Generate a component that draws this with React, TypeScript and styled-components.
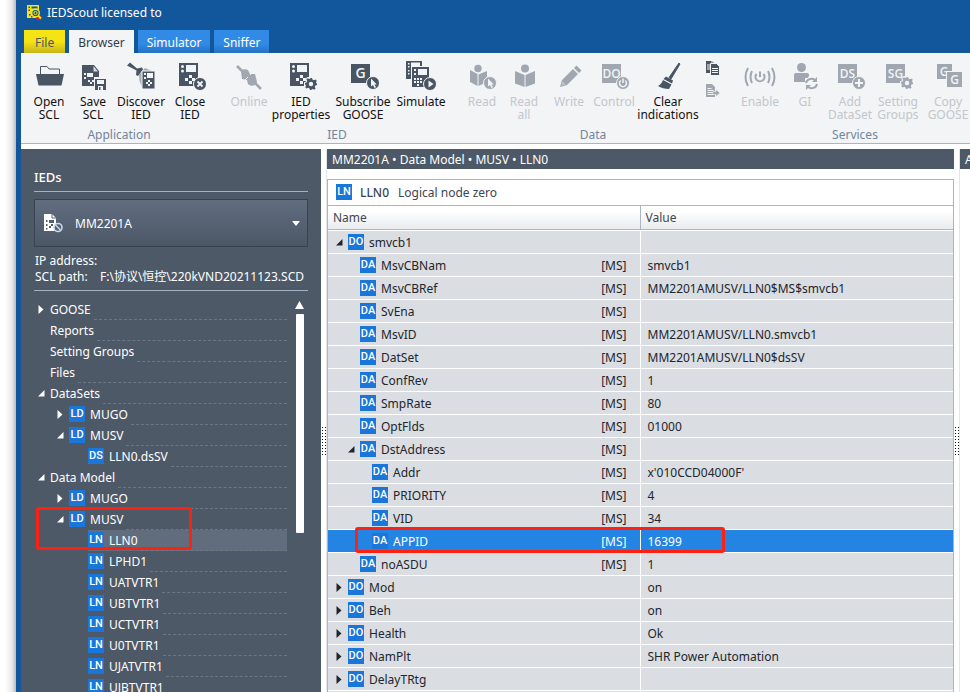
import React from "react";
import styled, { createGlobalStyle, css } from "styled-components";

const ink = "#4a5564";
const slate = "#4e5967";
const blue = "#12579b";
const badgeBlue = "#1a76d9";
const ribbonBg = "#f2f4f6";
const line = "#a9b4c4";
const red = "#ff2010";

const GlobalStyle = createGlobalStyle`
  * { box-sizing: border-box; }
  body {
    margin: 0;
    background: #fff;
    font-family: "Noto Sans", "Noto Sans CJK SC", sans-serif;
    font-size: 12px;
    line-height: 16px;
    color: #22262c;
  }
  button, select { font: inherit; }
`;

const Screen = styled.div`
  display: flex;
  height: 100vh;
  overflow: hidden;
`;

const Shadow = styled.div`
  flex: 0 0 16px;
  background: linear-gradient(to right, #fff 30%, #e9e9e9 75%, #b9bcc0);
`;

const Window = styled.div`
  flex: 1;
  min-width: 0;
  display: flex;
  flex-direction: column;
  background: ${blue};
  padding-left: 5px;
`;

const TitleBar = styled.header`
  display: flex;
  align-items: center;
  gap: 5px;
  height: 25px;
  padding-left: 6px;
  color: #fff;
`;

const TabBar = styled.nav`
  display: flex;
  gap: 4px;
  padding: 5px 3px 0;
`;

const Tab = styled.button<{ $kind?: "file" | "active" }>`
  height: 23px;
  border: 0;
  padding: 3px 9px 0;
  color: #fff;
  background: linear-gradient(#318ae6 60%, #2472c4);
  ${(p) => p.$kind === "file" && css`
    padding: 3px 11px 0;
    color: ${ink};
    background: linear-gradient(#f6e314 50%, #c6b51a);
  `}
  ${(p) => p.$kind === "active" && css`
    color: #333c48;
    background: ${ribbonBg};
  `}
`;

const Ribbon = styled.div`
  display: flex;
  height: 91px;
  overflow: hidden;
  background: ${ribbonBg};
  border-bottom: 1px solid ${line};
`;

const Group = styled.section<{ $pad: number; $padRight?: number }>`
  flex: none;
  position: relative;
  display: flex;
  flex-direction: column;
  padding: 8px ${(p) => p.$padRight ?? 4}px 0 ${(p) => p.$pad}px;
  & + &::before {
    content: "";
    position: absolute;
    left: 0;
    top: 9px;
    height: 75px;
    width: 1px;
    background: ${line};
  }
`;

const Tools = styled.div`
  display: flex;
  height: 66px;
`;

const GroupLabel = styled.div`
  text-align: center;
  color: #73859c;
`;

const ToolButton = styled.button<{ $w: number }>`
  width: ${(p) => p.$w}px;
  display: flex;
  flex-direction: column;
  align-items: center;
  gap: 3px;
  padding: 0;
  border: 0;
  background: none;
  white-space: nowrap;
  line-height: 13px;
  color: #111;
  & svg { color: ${ink}; flex: none; }
  &:disabled { color: #c3c7cc; }
  &:disabled svg { color: #a0a7b0; }
`;

const SmallTools = styled.div`
  display: flex;
  flex-direction: column;
  gap: 8px;
  width: 24px;
  align-items: center;
`;

const SmallButton = styled.button`
  display: flex;
  padding: 0;
  border: 0;
  background: none;
  color: ${ink};
  &:disabled { color: #a0a7b0; }
`;

const Body = styled.div`
  flex: 1;
  min-height: 0;
  display: flex;
  padding-top: 5px;
  background: #fff;
`;

const Sidebar = styled.aside`
  flex: 0 0 300px;
  overflow: hidden;
  padding: 20px 13px 0;
  background: ${slate};
  color: #fff;
`;

const SideTitle = styled.h2`
  margin: 0 0 7px;
  padding-bottom: 6px;
  border-bottom: 1px solid #a3b2c2;
  font-size: 13px;
  line-height: 16px;
  font-weight: 500;
`;

const Picker = styled.div`
  position: relative;
  height: 48px;
  border: 1px solid #39424e;
  background: linear-gradient(#616e80, #4c5766);
  & > svg { position: absolute; pointer-events: none; }
  & > svg:first-child { left: 8px; top: 13px; }
  & > svg:last-child { right: 7px; top: 21px; }
`;

const PickerSelect = styled.select`
  appearance: none;
  width: 100%;
  height: 100%;
  padding: 2px 24px 0 40px;
  border: 0;
  color: #fff;
  background: none;
`;

const Facts = styled.dl`
  display: grid;
  grid-template-columns: 65px 1fr;
  margin: 6px 0 8px;
  padding: 0 0 5px 1px;
  border-bottom: 1px solid #a3b2c2;
  white-space: nowrap;
  & dt, & dd { margin: 0; }
`;

const TreeArea = styled.div`
  display: flex;
  gap: 8px;
  padding-right: 3px;
`;

const Tree = styled.ul`
  flex: 1;
  min-width: 0;
  margin: 0;
  padding: 0;
  list-style: none;
`;

const TreeRow = styled.li<{ $level: number }>`
  position: relative;
  display: flex;
  height: 21px;
  padding-left: ${(p) => 4 + 19 * p.$level}px;
`;

const Twist = styled.span<{ $w: number }>`
  flex: none;
  width: ${(p) => p.$w}px;
  display: flex;
  align-items: center;
`;

const TreeItem = styled.span<{ $selected?: boolean }>`
  flex: 1;
  display: flex;
  line-height: 22px;
  white-space: nowrap;
  background: ${(p) => (p.$selected ? "#616d7d" : "transparent")};
`;

const Dashes = styled.span`
  flex: 1;
  margin-left: 3px;
  border-bottom: 1px dashed #6c7785;
`;

const Badge = styled.span`
  flex: none;
  display: inline-block;
  width: 16px;
  height: 16px;
  margin: 2px 5px 0 0;
  line-height: 16px;
  text-align: center;
  font-family: Roboto, sans-serif;
  font-weight: 500;
  font-size: 11px;
  color: #fff;
  background: ${badgeBlue};
`;

const Scroll = styled.div`
  flex: none;
  width: 10px;
  display: flex;
  flex-direction: column;
  align-items: center;
  gap: 5px;
  padding: 2px 1px 0 0;
`;

const Thumb = styled.div`
  width: 8px;
  height: 219px;
  border-radius: 1px;
  background: #fff;
`;

const Mark = styled.span<{ $w: number; $h: number }>`
  position: absolute;
  z-index: 1;
  width: ${(p) => p.$w}px;
  height: ${(p) => p.$h}px;
  border: 3px solid ${red};
  border-radius: 3px;
  pointer-events: none;
`;

const TreeMark = styled(Mark)`
  left: 2px;
  top: -2px;
`;

const RowMark = styled(Mark)`
  left: 27px;
  top: -3px;
`;

const Splitter = styled.div`
  flex: 0 0 6px;
  display: flex;
  align-items: center;
  justify-content: center;
  border-right: 1px solid #e4e7ea;
`;

const Grip = styled.div`
  width: 4px;
  height: 28px;
  margin-top: 40px;
  background:
    repeating-linear-gradient(transparent 0 1px, #fff 1px 3px),
    repeating-linear-gradient(to right, #111 0 1px, #fff 1px 3px);
`;

const Main = styled.main`
  flex: 1;
  min-width: 0;
  overflow: hidden;
`;

const PanelTitle = styled.div`
  height: 20px;
  padding-left: 5px;
  line-height: 21px;
  color: #fff;
  background: ${slate};
  white-space: nowrap;
`;

const RightPanel = styled.section`
  flex: 0 0 10px;
  overflow: hidden;
`;

const Sheet = styled.div`
  margin-top: 10px;
  border: 1px solid ${line};
`;

const SheetTitle = styled.div`
  display: flex;
  height: 26px;
  padding: 3px 8px 0;
  line-height: 20px;
  border-bottom: 1px solid ${line};
  color: #3c4450;
  & > ${Badge} { margin-right: 8px; margin-top: 1px; }
  & > strong { font-weight: 500; margin-right: 9px; }
`;

const Grid = styled.table`
  width: 100%;
  table-layout: fixed;
  border-collapse: separate;
  border-spacing: 0;
  & th, & td { padding: 0; text-align: left; font-weight: 400; white-space: nowrap; }
  & th {
    height: 24px;
    padding: 0 5px;
    color: #3f4650;
    border-bottom: 1px solid ${line};
    background: linear-gradient(#fff 20%, #e9ebee);
  }
  & th:first-child { width: calc(50% - 1px); border-right: 1px solid ${line}; }
  & td:first-child { border-right: 1px solid #fff; }
`;

const GridRow = styled.tr<{ $selected?: boolean }>`
  background: ${(p) => (p.$selected ? "#2484e4" : "#dadde2")};
  color: ${(p) => (p.$selected ? "#fff" : "#22262c")};
  & td { height: 23px; border-top: 1px solid #fff; }
  & td + td { padding: 2px 0 0 7px; }
`;

const NameCell = styled.div<{ $level: number }>`
  position: relative;
  display: flex;
  height: 22px;
  line-height: 24px;
  padding: 0 13px 0 ${(p) => 8 + 12 * p.$level}px;
  & > ${Badge} { margin-top: 3px; }
`;

const Access = styled.span`
  margin-left: auto;
`;

const TriRight = () => (
  <svg width="6" height="9" viewBox="0 0 6 9" aria-hidden="true"><path d="M0.5 0L5.5 4.500L0.5 9z" fill="currentColor" /></svg>
);
const TriOpen = () => (
  <svg width="7" height="7" viewBox="0 0 7 7" aria-hidden="true"><path d="M6.500 0V6.5H0z" fill="currentColor" /></svg>
);

const Icon = ({ children }: { children: React.ReactNode }) => (
  <svg width="32" height="31" viewBox="0 0 32 31" fill="currentColor" aria-hidden="true">{children}</svg>
);

const GEAR = "M-1-6h2l.5 1.6 1.4.6 1.5-.8 1.4 1.4-.8 1.5.6 1.4L6-1v2l-1.600.500-.6 1.400.8 1.500-1.400 1.400-1.500-.8-1.400.6L1 6h-2l-.5-1.600-1.400-.6-1.500.8-1.400-1.400.8-1.500-.6-1.400L-6 1v-2l1.600-.5.6-1.400-.8-1.500 1.400-1.400 1.500.8 1.400-.6z";
const Gear = ({ x, y }: { x: number; y: number }) => (
  <g transform={`translate(${x} ${y})`}>
    <path d={GEAR} stroke={ribbonBg} strokeWidth="2" />
    <path d={GEAR} />
    <circle r="2.200" fill={ribbonBg} />
  </g>
);

const Dot = ({ x, y }: { x: number; y: number }) => (
  <circle cx={x} cy={y} r="6.500" stroke={ribbonBg} strokeWidth="1" />
);

const Pointer = ({ x, y }: { x: number; y: number }) => (
  <g>
    <Dot x={x} y={y} />
    <path d={`M${x - 2} ${y - 4.500}v8l2-1.500 1.500 3 1.500-.8-1.500-2.700h2.300z`} fill={ribbonBg} />
  </g>
);

const Device = () => (
  <g>
    <path d="M5 2h19v23H5z" />
    <g fill={ribbonBg}>
      <circle cx="8.500" cy="5.500" r="1.500" />
      <circle cx="8.500" cy="10" r="1.500" />
      <path d="M12 4h10v7H12zM11 17h3v3h-3zM15 14h3v3h-3zM18 17h3v3h-3zM15 20h3v3h-3z" />
    </g>
  </g>
);

const Block = ({ text }: { text: string }) => (
  <g>
    <path d="M4 3h19v19H4z" />
    <text x="13.500" y="17" textAnchor="middle" fontFamily="Open Sans, sans-serif" fontWeight="600" fontSize={text.length > 1 ? 12 : 14} fill={ribbonBg}>{text}</text>
  </g>
);

const icons = {
  open: <Icon><path d="M7.500 13V5.500H14l2 2.500h10.500v5" fill="none" stroke="currentColor" /><path d="M3 13h28l-2.500 11.500H5.500z" /></Icon>,
  save: (
    <Icon>
      <path d="M5 4h12l5 6v10h-4v5H5z" />
      <path d="M16.500 5v5.500H21z" fill={ribbonBg} opacity=".85" />
      <g fill={ribbonBg}><path d="M7 12h2v2H7zM7 16h2v2H7zM10 12h6v4h-6zM11 19h2v2h-2zM13 21h2v2h-2zM15 19h2v2h-2z" /><path d="M17 16h13v14H17z" /></g>
      <path d="M18 18h11v11H18z" /><path d="M20 19h7v4h-7zM21 25h5v4h-5z" fill={ribbonBg} /><path d="M22 26h1.500v3H22z" />
    </Icon>
  ),
  discover: (
    <Icon>
      <path d="M2 4.500L5 1.500l7 6 5-1 1 2-5 6.500-2-1 .5-4.500z" />
      <path d="M14 14L20 7l7 3-10 16-2.500-6z" opacity=".45" />
      <path d="M17 10h13v18H17z" stroke={ribbonBg} strokeWidth="1" />
      <g fill={ribbonBg}><path d="M19 12h2v2h-2zM19 16h2v2h-2zM22 12h6v5h-6zM23 19h2v2h-2zM21 21h2v2h-2zM25 21h2v2h-2zM23 23h2v2h-2z" /></g>
    </Icon>
  ),
  close: <Icon><Device /><Dot x={26} y={23} /><path d="M23.500 20.500l5 5m0-5l-5 5" stroke={ribbonBg} strokeWidth="1.800" /></Icon>,
  online: (
    <Icon>
      <path d="M4 5l8 8M21 21l7 7" stroke="currentColor" strokeWidth="2.500" />
      <path d="M8 10c2-2 4-2 7-1l2 4 5 0 2 8-2 3c-3 1-5 1-7-1l-1-4-5-1z" />
      <path d="M11 20l4-4M17 14l3-4" stroke={ribbonBg} strokeWidth="1" />
    </Icon>
  ),
  props: <Icon><Device /><Gear x={26} y={23} /></Icon>,
  subscribe: <Icon><Block text="G" /><Pointer x={26} y={22} /></Icon>,
  simulate: (
    <Icon>
      <path d="M1 0h16v18H1z" />
      <g fill={ribbonBg}><path d="M6 1.500h9v6H6zM3 2h1.500v1.500H3zM3 5h1.500v1.500H3zM3 9h1.500v1.500H3zM3 12h1.500v1.500H3z" /><path d="M6 5h19v22H6z" /></g>
      <path d="M7 6h17v20H7z" />
      <g fill={ribbonBg}><path d="M13 8h9v6h-9zM9 8h2v2H9zM9 12h2v2H9zM9 17h2v2H9zM12 17h2v2h-2zM15 17h2v2h-2zM9 20h2v2H9zM12 20h2v2h-2zM15 20h2v2h-2zM12 23h2v2h-2z" /></g>
      <Dot x={25} y={23} /><path d="M23.500 19.500v7l5-3.500z" fill={ribbonBg} />
    </Icon>
  ),
  read: <Icon><circle cx="12" cy="7.500" r="3.700" /><path d="M4 9l7.500 4v12L4 21zM21 10l-8.500 3.500V25l8.500-4z" /><Pointer x={24} y={22} /></Icon>,
  readAll: <Icon><circle cx="17" cy="7.500" r="4" /><path d="M7 10l9.500 4v12L7 22.500zM27 10l-9.500 4v12l9.500-3.500z" /></Icon>,
  write: <Icon><path d="M7 26l2-7L20 8l5 5-11 11zM21 7l2.500-2.500 5 5L26 12z" /><path d="M8.500 24.500l1-4 3 3z" fill={ribbonBg} opacity=".4" /></Icon>,
  control: <Icon><Block text="DO" /><Dot x={25} y={22} /><path d="M22.800 19.500a3.500 3.500 0 1 0 4.400 0M25 17.500v4.500" stroke={ribbonBg} strokeWidth="1.500" fill="none" /></Icon>,
  clear: <Icon><path d="M27 2l1 1-9 15-2-1.500z" stroke="currentColor" /><path d="M14 15.500l7 4-1 3-8.500-4.500z" /><path d="M11 19l8.500 4.500L17 28c-4 0-8-1-11-3 2-1 4-3 5-6z" /></Icon>,
  enable: (
    <Icon>
      <g fill="none" stroke="currentColor" strokeWidth="2">
        <path d="M12.500 13a4.500 4.500 0 1 0 7 0M16 10.500v5.500" /><path d="M8 10q-3 6 0 12M24 10q3 6 0 12M4 7q-5 9 0 18M28 7q5 9 0 18" />
      </g>
    </Icon>
  ),
  gi: (
    <Icon>
      <circle cx="12.500" cy="6.500" r="4.500" /><path d="M5 14q0-2 2-2h11q2 0 2 2v1l-4 6H5z" />
      <path d="M16 17h13v12H16z" fill={ribbonBg} />
      <path d="M17 22a5.500 5 0 0 1 9-3M28 23a5.500 5 0 0 1-9 3" fill="none" stroke="currentColor" strokeWidth="2" />
      <path d="M28 16v5h-5zM17 29v-5h5z" />
    </Icon>
  ),
  addSet: <Icon><Block text="DS" /><Dot x={25} y={22} /><path d="M25 18v8M21 22h8" stroke={ribbonBg} strokeWidth="2" /></Icon>,
  setGroups: <Icon><Block text="SG" /><Gear x={25} y={22} /></Icon>,
  copyGoose: (
    <Icon>
      <path d="M5 3h15v15H5z" /><text x="12" y="15" textAnchor="middle" fontFamily="Open Sans, sans-serif" fontWeight="600" fontSize="12" fill={ribbonBg}>G</text>
      <path d="M14.500 10.500h16v16h-16z" stroke={ribbonBg} /><text x="22.500" y="23" textAnchor="middle" fontFamily="Open Sans, sans-serif" fontWeight="600" fontSize="12" fill={ribbonBg}>G</text>
    </Icon>
  ),
};

type Tool = { icon: keyof typeof icons; label: [string, string?]; w: number; off?: boolean };
const ToolList = ({ tools }: { tools: Tool[] }) => (
  <>
    {tools.map((t) => (
      <ToolButton key={t.icon} $w={t.w} disabled={t.off}>
        {icons[t.icon]}
        <span>{t.label[0]}{t.label[1] && <><br />{t.label[1]}</>}</span>
      </ToolButton>
    ))}
  </>
);

const application: Tool[] = [
  { icon: "open", label: ["Open", "SCL"], w: 46 },
  { icon: "save", label: ["Save", "SCL"], w: 42 },
  { icon: "discover", label: ["Discover", "IED"], w: 54 },
  { icon: "close", label: ["Close", "IED"], w: 44 },
];
const ied: Tool[] = [
  { icon: "online", label: ["Online"], w: 44, off: true },
  { icon: "props", label: ["IED", "properties"], w: 60 },
  { icon: "subscribe", label: ["Subscribe", "GOOSE"], w: 64 },
  { icon: "simulate", label: ["Simulate"], w: 52 },
];
const data: Tool[] = [
  { icon: "read", label: ["Read"], w: 42, off: true },
  { icon: "readAll", label: ["Read", "all"], w: 42, off: true },
  { icon: "write", label: ["Write"], w: 48, off: true },
  { icon: "control", label: ["Control"], w: 42, off: true },
  { icon: "clear", label: ["Clear", "indications"], w: 66 },
];
const services: Tool[] = [
  { icon: "enable", label: ["Enable"], w: 44, off: true },
  { icon: "gi", label: ["GI"], w: 46, off: true },
  { icon: "addSet", label: ["Add", "DataSet"], w: 44, off: true },
  { icon: "setGroups", label: ["Setting", "Groups"], w: 52, off: true },
  { icon: "copyGoose", label: ["Copy", "GOOSE"], w: 48, off: true },
];

type Node = { level: number; text: string; badge?: string; state?: "open" | "closed"; selected?: boolean; mark?: boolean };
const tree: Node[] = [
  { level: 0, text: "GOOSE", state: "closed" },
  { level: 0, text: "Reports" },
  { level: 0, text: "Setting Groups" },
  { level: 0, text: "Files" },
  { level: 0, text: "DataSets", state: "open" },
  { level: 1, text: "MUGO", badge: "LD", state: "closed" },
  { level: 1, text: "MUSV", badge: "LD", state: "open" },
  { level: 2, text: "LLN0.dsSV", badge: "DS" },
  { level: 0, text: "Data Model", state: "open" },
  { level: 1, text: "MUGO", badge: "LD", state: "closed" },
  { level: 1, text: "MUSV", badge: "LD", state: "open", mark: true },
  { level: 2, text: "LLN0", badge: "LN", selected: true },
  ...["LPHD1", "UATVTR1", "UBTVTR1", "UCTVTR1", "U0TVTR1", "UJATVTR1", "UJBTVTR1"].map((text) => ({ level: 2, text, badge: "LN" })),
];

type Attr = Node & { ms?: boolean; value?: string };
const attr = (level: number, text: string, value = "", extra: Partial<Attr> = {}): Attr => ({ level, text, value, badge: "DA", ms: true, ...extra });
const obj = (text: string, value = "", state: "open" | "closed" = "closed"): Attr => ({ level: 0, text, value, badge: "DO", state });
const attrs: Attr[] = [
  obj("smvcb1", "", "open"),
  attr(1, "MsvCBNam", "smvcb1"),
  attr(1, "MsvCBRef", "MM2201AMUSV/LLN0$MS$smvcb1"),
  attr(1, "SvEna"),
  attr(1, "MsvID", "MM2201AMUSV/LLN0.smvcb1"),
  attr(1, "DatSet", "MM2201AMUSV/LLN0$dsSV"),
  attr(1, "ConfRev", "1"),
  attr(1, "SmpRate", "80"),
  attr(1, "OptFlds", "01000"),
  attr(1, "DstAddress", "", { state: "open" }),
  attr(2, "Addr", "x'010CCD04000F'"),
  attr(2, "PRIORITY", "4"),
  attr(2, "VID", "34"),
  attr(2, "APPID", "16399", { selected: true, mark: true }),
  attr(1, "noASDU", "1"),
  obj("Mod", "on"),
  obj("Beh", "on"),
  obj("Health", "Ok"),
  obj("NamPlt", "SHR Power Automation"),
  obj("DelayTRtg"),
];

const Twisty = ({ state, w }: { state?: "open" | "closed"; w: number }) => (
  <Twist $w={w}>{state === "open" ? <TriOpen /> : state === "closed" ? <TriRight /> : null}</Twist>
);

export default function App() {
  return (
    <Screen>
      <GlobalStyle />
      <Shadow />
      <Window>
        <TitleBar>
          <svg width="15" height="15" viewBox="0 0 15 15" aria-hidden="true">
            <path d="M0 0h12v13H0z" fill="#f6e314" />
            <path d="M1.500 1.500h1.500v1.500H1.500zM1.500 4.500h1.500v1.500H1.500zM4.500 1.500h6v2h-6zM2 9h1.500v1.500H2zM4 11h1.500v1.500H4z" fill={blue} />
            <path d="M8 11l2-1 4 1v4h-4z" fill="#d81e28" />
            <circle cx="8.500" cy="8" r="3.800" fill={blue} stroke="#f6e314" strokeWidth="1.400" />
            <circle cx="8.500" cy="8" r="1.600" fill="none" stroke="#f6e314" />
            <path d="M11 10.500l3 3" stroke="#f6e314" strokeWidth="2" />
          </svg>
          <span>IEDScout licensed to</span>
        </TitleBar>
        <TabBar>
          <Tab $kind="file">File</Tab>
          <Tab $kind="active">Browser</Tab>
          <Tab>Simulator</Tab>
          <Tab>Sniffer</Tab>
        </TabBar>
        <Ribbon>
          <Group $pad={5} $padRight={7}>
            <Tools><ToolList tools={application} /></Tools>
            <GroupLabel>Application</GroupLabel>
          </Group>
          <Group $pad={8} $padRight={5}>
            <Tools><ToolList tools={ied} /></Tools>
            <GroupLabel>IED</GroupLabel>
          </Group>
          <Group $pad={9}>
            <Tools>
              <ToolList tools={data} />
              <SmallTools>
                <SmallButton aria-label="Copy">
                  <svg width="14" height="15" viewBox="0 0 14 15" fill="currentColor" aria-hidden="true">
                    <path d="M0 0h6l3 3v9H0z" /><path d="M1 4h4M1 6h4M1 8h4M6 0v3h3" stroke={ribbonBg} fill="none" />
                    <path d="M4.500 2.500h6l3 3v9h-9z" stroke={ribbonBg} /><path d="M6 7.500h6M6 9.500h6M6 11.500h6" stroke={ribbonBg} />
                  </svg>
                </SmallButton>
                <SmallButton aria-label="Export" disabled>
                  <svg width="14" height="14" viewBox="0 0 14 14" fill="currentColor" aria-hidden="true">
                    <path d="M0 0h6l3 3v10H0z" /><path d="M1.500 4.500h4M1.500 6.500h6M1.500 8.500h6M1.500 10.500h6" stroke={ribbonBg} />
                    <path d="M7 7.500h3v-2l4 3.500-4 3.500v-2H7z" stroke={ribbonBg} strokeWidth=".5" />
                  </svg>
                </SmallButton>
              </SmallTools>
            </Tools>
            <GroupLabel>Data</GroupLabel>
          </Group>
          <Group $pad={9} $padRight={8}>
            <Tools><ToolList tools={services} /></Tools>
            <GroupLabel>Services</GroupLabel>
          </Group>
        </Ribbon>
        <Body>
          <Sidebar>
            <SideTitle>IEDs</SideTitle>
            <Picker>
              <svg width="20" height="20" viewBox="0 0 20 20" aria-hidden="true">
                <path d="M1 1h8l4 4v13H1z" fill="#fff" />
                <path d="M9 1v4h4" fill="none" stroke="#5a6677" />
                <path d="M3 7h1.500v2H3zM3 11h1.500v2H3zM6 7h5v3H6zM6 13h2v2H6zM8 11h2v2H8zM3 15h1.500v1.500H3z" fill="#56616f" />
                <circle cx="15" cy="14.500" r="4" fill="#56616f" stroke="#c9d9ec" strokeWidth="1.600" />
                <path d="M12.500 12l5 5" stroke="#c9d9ec" strokeWidth="1.400" />
              </svg>
              <PickerSelect aria-label="IED" defaultValue="MM2201A"><option>MM2201A</option></PickerSelect>
              <svg width="8" height="5" viewBox="0 0 8 5" aria-hidden="true"><path d="M0 0h8L4 5z" fill="#fff" /></svg>
            </Picker>
            <Facts>
              <dt>IP address:</dt><dd />
              <dt>SCL path:</dt><dd>F:\协议\恒控\220kVND20211123.SCD</dd>
            </Facts>
            <TreeArea>
              <Tree>
                {tree.map((n, i) => (
                  <TreeRow key={i} $level={n.level}>
                    <Twisty state={n.state} w={12} />
                    <TreeItem $selected={n.selected}>
                      {n.badge && <Badge>{n.badge}</Badge>}
                      {n.text}
                      <Dashes />
                    </TreeItem>
                    {n.mark && <TreeMark $w={156} $h={43} />}
                  </TreeRow>
                ))}
              </Tree>
              <Scroll>
                <svg width="9" height="8" viewBox="0 0 9 8" aria-hidden="true"><path d="M0 8h9L4.500 0z" fill="#fff" /></svg>
                <Thumb />
              </Scroll>
            </TreeArea>
          </Sidebar>
          <Splitter><Grip /></Splitter>
          <Main>
            <PanelTitle>MM2201A • Data Model • MUSV • LLN0</PanelTitle>
            <Sheet>
              <SheetTitle><Badge>LN</Badge><strong>LLN0</strong><span>Logical node zero</span></SheetTitle>
              <Grid>
                <thead><tr><th>Name</th><th>Value</th></tr></thead>
                <tbody>
                  {attrs.map((a) => (
                    <GridRow key={a.text} $selected={a.selected}>
                      <td>
                        <NameCell $level={a.level}>
                          <Twisty state={a.state} w={12} />
                          <Badge>{a.badge}</Badge>
                          {a.text}
                          {a.ms && <Access>[MS]</Access>}
                          {a.mark && <RowMark $w={370} $h={26} />}
                        </NameCell>
                      </td>
                      <td>{a.value}</td>
                    </GridRow>
                  ))}
                  <GridRow><td /><td /></GridRow>
                </tbody>
              </Grid>
            </Sheet>
          </Main>
          <Splitter><Grip /></Splitter>
          <RightPanel><PanelTitle>A</PanelTitle></RightPanel>
        </Body>
      </Window>
    </Screen>
  );
}
